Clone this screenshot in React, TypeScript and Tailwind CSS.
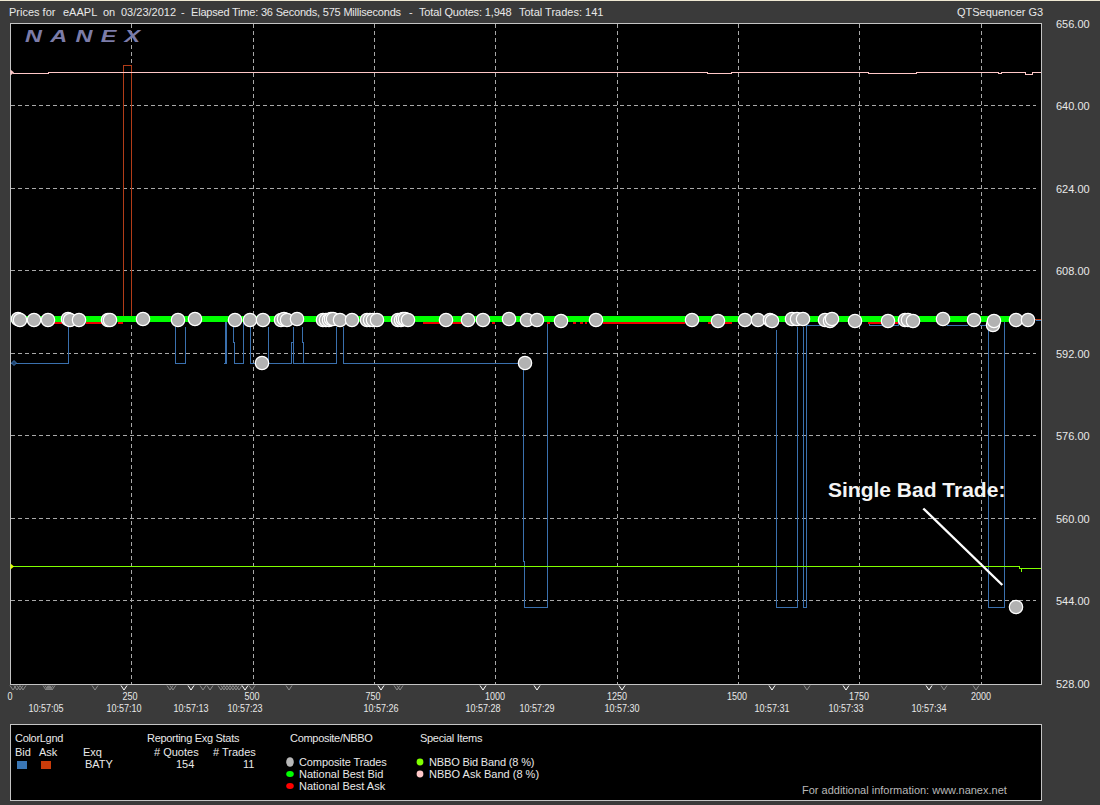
import React from "react";

const vGrid = [131, 253, 374, 495, 617, 738, 859, 981];
const hGrid = [105, 188, 270, 353, 435, 518, 600];

const trades: [number, number][] = [
  [18, 319], [20, 320], [34, 320], [48, 320], [68, 319], [70, 320], [79, 320], [108, 320], [110, 320], [143, 319], [178, 320], [195, 319],
  [235, 320], [250, 320], [263, 320], [281, 320], [284, 319], [287, 320], [297, 319], [323, 320], [326, 320], [329, 320], [331, 319], [333, 319], [340, 320], [352, 320],
  [367, 320], [370, 320], [373, 320], [377, 320], [398, 320], [401, 320], [403, 319], [405, 319], [408, 320], [446, 320], [468, 320], [483, 320], [509, 319], [527, 320], [537, 320],
  [561, 321], [596, 320], [692, 320], [718, 321], [745, 320], [758, 320], [770, 320], [772, 321], [792, 319], [797, 319], [803, 319], [825, 320], [830, 321], [832, 319], [855, 321],
  [888, 321], [905, 320], [908, 320], [913, 321], [943, 319], [974, 320], [993, 325], [994, 321], [1016, 320], [1028, 320],
  [262, 363], [525, 363], [1016, 607],
];

const blue = [
  "M11 363.5H68.5V327",
  "M175.5 327V363.5H185.5V327",
  "M225.5 322V363.5M226.5 322V363.5M224 363.5H227",
  "M233.5 327V342H234.5V363.5H243.5V322",
  "M250.5 327V363.5H256",
  "M268.5 327V363.5H291.5V342H293.5V327",
  "M293.5 327V363.5H336.5V327",
  "M302.5 327V342H303.5V363.5",
  "M343.5 327V363.5H520",
  "M523.5 370V561H524.5V607.5H547.5V322",
  "M776.5 330V607.5H797.5V327",
  "M803.5 327V607.5H806.5V325.5H822",
  "M869.5 323V325.5H898V322",
  "M947 325.5H968",
  "M980 325.5H988.5V607.5H1004.5V322",
  "M1036 320.5H1041",
];

const red: [number, number][] = [
  [54, 62], [86, 102], [118, 123], [423, 440], [452, 462], [492, 495], [547, 550], [573, 576], [580, 583], [585, 587], [603, 685], [708, 732], [868, 898], [1022, 1024],
];

const ticks: [number, string][] = [
  [13, "#8c8c8c"], [17, "#8c8c8c"], [20, "#8c8c8c"], [23, "#8c8c8c"], [46, "#8c8c8c"], [48, "#8c8c8c"], [50, "#8c8c8c"], [52, "#8c8c8c"], [95, "#8c8c8c"], [124, "#ffffff"],
  [170, "#8c8c8c"], [173, "#8c8c8c"], [191, "#ffffff"], [203, "#8c8c8c"], [210, "#8c8c8c"], [221, "#8c8c8c"], [224, "#8c8c8c"], [227, "#8c8c8c"], [230, "#8c8c8c"], [233, "#8c8c8c"],
  [236, "#8c8c8c"], [239, "#8c8c8c"], [245, "#ffffff"], [252, "#8c8c8c"], [289, "#8c8c8c"], [381, "#ffffff"], [397, "#8c8c8c"], [400, "#8c8c8c"], [483, "#ffffff"], [537, "#ffffff"],
  [622, "#ffffff"], [772, "#ffffff"], [807, "#8c8c8c"], [846, "#ffffff"], [929, "#ffffff"], [944, "#8c8c8c"], [976, "#8c8c8c"],
];

const labels: [string, string][] = [
  ["left-[9px] top-[6px]", "Prices for"],
  ["left-[63px] top-[6px]", "eAAPL"],
  ["left-[103px] top-[6px]", "on"],
  ["left-[121px] top-[6px]", "03/23/2012"],
  ["left-[181px] top-[6px]", "-"],
  ["left-[191px] top-[6px] tracking-[-0.2px]", "Elapsed Time: 36 Seconds, 575 Milliseconds"],
  ["left-[409px] top-[6px]", "-"],
  ["left-[419px] top-[6px] tracking-[-0.15px]", "Total Quotes: 1,948"],
  ["left-[519px] top-[6px]", "Total Trades: 141"],
  ["left-[957px] top-[6px]", "QTSequencer G3"],
  ["left-[1056px] top-[18px]", "656.00"],
  ["left-[1056px] top-[100px]", "640.00"],
  ["left-[1056px] top-[183px]", "624.00"],
  ["left-[1056px] top-[265px]", "608.00"],
  ["left-[1056px] top-[348px]", "592.00"],
  ["left-[1056px] top-[430px]", "576.00"],
  ["left-[1056px] top-[513px]", "560.00"],
  ["left-[1056px] top-[595px]", "544.00"],
  ["left-[1056px] top-[678px]", "528.00"],
  ["left-[10px] top-[690px] -translate-x-1/2 text-[10px] scale-x-90", "0"],
  ["left-[130px] top-[690px] -translate-x-1/2 text-[10px] scale-x-90", "250"],
  ["left-[252px] top-[690px] -translate-x-1/2 text-[10px] scale-x-90", "500"],
  ["left-[373px] top-[690px] -translate-x-1/2 text-[10px] scale-x-90", "750"],
  ["left-[495px] top-[690px] -translate-x-1/2 text-[10px] scale-x-90", "1000"],
  ["left-[617px] top-[690px] -translate-x-1/2 text-[10px] scale-x-90", "1250"],
  ["left-[737px] top-[690px] -translate-x-1/2 text-[10px] scale-x-90", "1500"],
  ["left-[859px] top-[690px] -translate-x-1/2 text-[10px] scale-x-90", "1750"],
  ["left-[981px] top-[690px] -translate-x-1/2 text-[10px] scale-x-90", "2000"],
  ["left-[46px] top-[702px] -translate-x-1/2 text-[10px] scale-x-90", "10:57:05"],
  ["left-[124px] top-[702px] -translate-x-1/2 text-[10px] scale-x-90", "10:57:10"],
  ["left-[191px] top-[702px] -translate-x-1/2 text-[10px] scale-x-90", "10:57:13"],
  ["left-[245px] top-[702px] -translate-x-1/2 text-[10px] scale-x-90", "10:57:23"],
  ["left-[381px] top-[702px] -translate-x-1/2 text-[10px] scale-x-90", "10:57:26"],
  ["left-[483px] top-[702px] -translate-x-1/2 text-[10px] scale-x-90", "10:57:28"],
  ["left-[537px] top-[702px] -translate-x-1/2 text-[10px] scale-x-90", "10:57:29"],
  ["left-[622px] top-[702px] -translate-x-1/2 text-[10px] scale-x-90", "10:57:30"],
  ["left-[772px] top-[702px] -translate-x-1/2 text-[10px] scale-x-90", "10:57:31"],
  ["left-[846px] top-[702px] -translate-x-1/2 text-[10px] scale-x-90", "10:57:33"],
  ["left-[929px] top-[702px] -translate-x-1/2 text-[10px] scale-x-90", "10:57:34"],
  ["left-[15px] top-[732px] tracking-[-0.3px]", "ColorLgnd"],
  ["left-[15px] top-[746px]", "Bid"],
  ["left-[39px] top-[746px]", "Ask"],
  ["left-[83px] top-[746px]", "Exq"],
  ["left-[85px] top-[758px]", "BATY"],
  ["left-[147px] top-[732px] tracking-[-0.3px]", "Reporting Exg Stats"],
  ["left-[154px] top-[746px]", "# Quotes"],
  ["left-[213px] top-[746px]", "# Trades"],
  ["left-[176px] top-[758px]", "154"],
  ["left-[243px] top-[758px]", "11"],
  ["left-[290px] top-[732px] tracking-[-0.3px]", "Composite/NBBO"],
  ["left-[299px] top-[756px] tracking-[-0.1px]", "Composite Trades"],
  ["left-[299px] top-[768px]", "National Best Bid"],
  ["left-[299px] top-[780px]", "National Best Ask"],
  ["left-[420px] top-[732px] tracking-[-0.3px]", "Special Items"],
  ["left-[429px] top-[756px] tracking-[-0.15px]", "NBBO Bid Band (8 %)"],
  ["left-[429px] top-[768px]", "NBBO Ask Band (8 %)"],
];

export default function App() {
  return (
    <div className="relative h-[805px] w-[1100px] overflow-hidden bg-[#3a3a3a] [font-family:Liberation_Sans,sans-serif] text-[11px] leading-[13px] text-[#e8e8e8]">
      <div className="absolute left-0 top-0 h-px w-full bg-[#efe9d3]" />

      <div className="absolute left-[10px] top-[23px] h-[662px] w-[1032px] border border-[#c4c4c4] bg-black" />
      <div className="absolute left-[10px] top-[724px] h-[77px] w-[1032px] border border-[#c4c4c4] bg-black" />

      <svg className="absolute left-0 top-0 h-[805px] w-[1100px]" viewBox="0 0 1100 805" fill="none">
        <g stroke="#a8a8a8" strokeDasharray="4 3" shapeRendering="crispEdges">
          {vGrid.map((x) => (
            <line key={x} x1={x + 0.5} y1={24} x2={x + 0.5} y2={684} />
          ))}
          {hGrid.map((y) => (
            <line key={y} x1={11} y1={y + 0.5} x2={1036} y2={y + 0.5} />
          ))}
        </g>

        <path d="M123.5 322V65.5H131.5V322" stroke="#b23c18" shapeRendering="crispEdges" />
        <path d="M1034 319.5H1041" stroke="#b23c18" shapeRendering="crispEdges" />

        <path
          d="M13 73.5H48V72.5H707V73.5H731V72.5H868V73.5H916V72.5H998V73.5H1001V72.5H1025V74.5H1032.5V72.5H1041"
          stroke="#ffc8c8"
          shapeRendering="crispEdges"
        />
        <path d="M10.5 69.5L14 72.5L10.5 75.5Z" fill="#ffc8c8" />

        <g stroke="#3a70ae" shapeRendering="crispEdges">
          {blue.map((d) => (
            <path key={d} d={d} />
          ))}
        </g>
        <path d="M14 360.5L16.5 363L14 365.5L11.5 363Z" fill="#20446e" stroke="#3a70ae" />

        <path d="M11 566.5H1019.5V568.5H1041" stroke="#80ff00" shapeRendering="crispEdges" />
        <path d="M1021.5 568.5V572" stroke="#80ff00" shapeRendering="crispEdges" />
        <path d="M10.5 563.5L14 566.5L10.5 569.5Z" fill="#e0ff00" />

        <rect x="11" y="316" width="1010" height="6" fill="#00ff00" shapeRendering="crispEdges" />
        {red.map(([a, b]) => (
          <rect key={a} x={a} y="322" width={b - a} height="1.5" fill="#f00000" shapeRendering="crispEdges" />
        ))}

        {trades.map(([x, y], i) => (
          <circle key={i} cx={x} cy={y} r="6.7" fill="#b2b2b2" stroke="#ffffff" strokeWidth="1.2" />
        ))}

        {ticks.map(([x, c], i) => (
          <path key={i} d={`M${x - 3} 685.5L${x} 690L${x + 3} 685.5`} stroke={c} />
        ))}

        <path d="M923.3 508.5L1002.3 585" stroke="#ffffff" strokeWidth="2.4" />

        <ellipse cx="290" cy="762" rx="3.8" ry="4.8" fill="#b8b8b8" />
        <ellipse cx="290" cy="774" rx="3.8" ry="3" fill="#00ff00" />
        <ellipse cx="290" cy="786" rx="3.8" ry="3" fill="#ff0000" />
        <circle cx="420" cy="762" r="3.4" fill="#80ff00" />
        <circle cx="420" cy="774" r="3.4" fill="#ffc8c8" />
      </svg>

      <div className="absolute left-[25px] top-[28px] origin-left scale-x-[1.38] whitespace-pre text-[17px] font-bold italic leading-[17px] tracking-[6px] text-[#7c7ca8]">
        NANEX
      </div>

      {labels.map(([pos, text]) => (
        <div key={pos} className={`absolute whitespace-pre ${pos}`}>
          {text}
        </div>
      ))}

      <div className="absolute left-[17px] top-[761px] h-[8px] w-[10px] bg-[#3a76b4]" />
      <div className="absolute left-[41px] top-[761px] h-[8px] w-[10px] bg-[#c83c0a]" />

      <div className="absolute left-[802px] top-[784px] whitespace-pre text-[#b8b8b8]">
        For additional information: www.nanex.net
      </div>

      <div className="absolute left-[828px] top-[478px] whitespace-pre text-[21px] font-bold leading-[23px] text-[#f4f4f4]">
        Single Bad Trade:
      </div>
    </div>
  );
}
